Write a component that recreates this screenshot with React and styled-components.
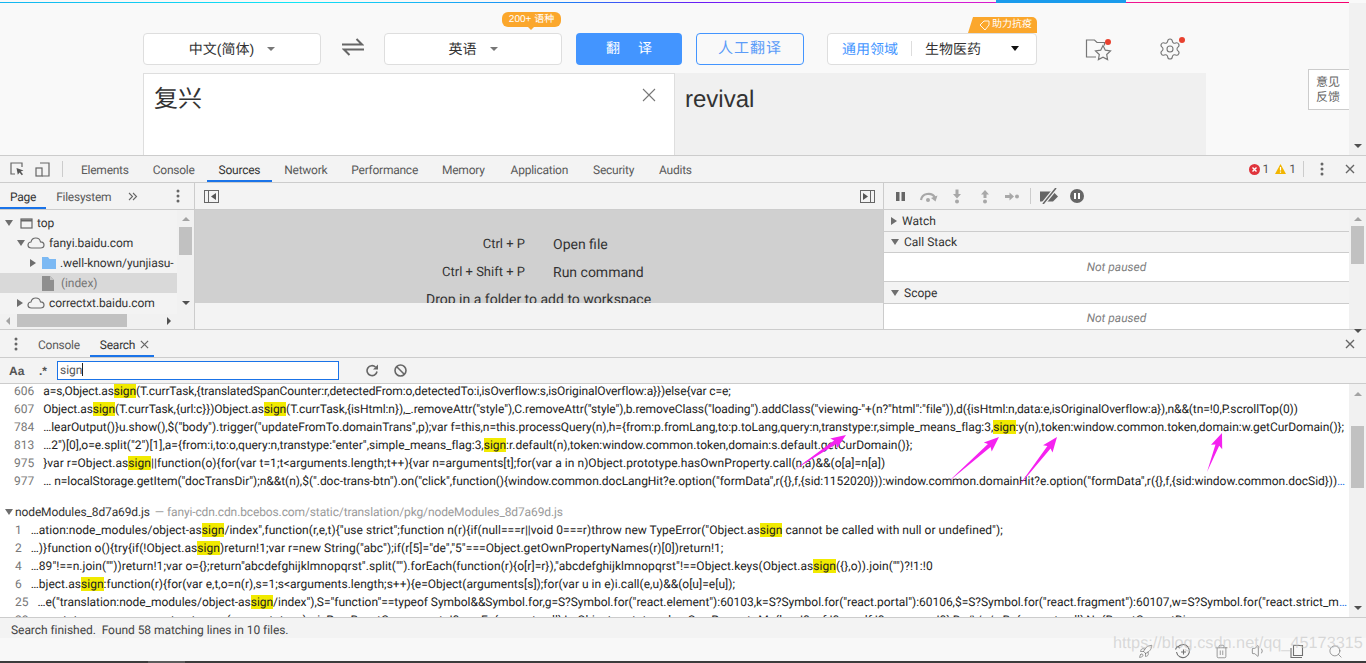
import React from 'react';
import styled, { createGlobalStyle } from 'styled-components';
import { Settings, Rocket, Trash2, Volume1, Search as SearchIcon } from 'lucide-react';

const GlobalStyle = createGlobalStyle`
  html, body {
    margin: 0;
    padding: 0;
    height: 100%;
    overflow: hidden;
    background: #f9f9f9;
  }
  #root {
    height: 100%;
  }
`;

const UI = '"Roboto", "Liberation Sans", sans-serif';
const CN = '"Liberation Sans", "Noto Sans CJK SC", sans-serif';

const Page = styled.div`
  position: relative;
  width: 1366px;
  height: 663px;
  overflow: hidden;
  display: flex;
  flex-direction: column;
  font-family: ${UI};
  text-rendering: geometricPrecision;
`;

/* translate page */
const Site = styled.div`
  height: 155px;
  display: flex;
  flex-direction: column;
  background: #f9f9f9;
  font-family: ${CN};
`;

const ProgressLine = styled.div`
  height: 3px;
  position: relative;
  flex: none;
  &::before {
    content: '';
    position: absolute;
    left: 0;
    right: 17px;
    top: 2px;
    height: 1px;
    background: linear-gradient(90deg, #14b5f0 0%, #12e5f5 22%, #1f7df5 42%, #6a1cf5 52%, #c81ff0 66%, #f0148c 85%, #f5006e 100%);
  }
  &::after {
    content: '';
    position: absolute;
    left: 996px;
    width: 130px;
    top: 0;
    height: 3px;
    background: #1a9bec;
  }
`;

const SiteBody = styled.div`
  flex: 1;
  display: flex;
  min-height: 0;
`;

const SiteMain = styled.div`
  flex: 1;
  padding: 30px 0 0 143px;
  min-width: 0;
`;

const PageScroll = styled.div`
  width: 17px;
  background: #f1f1f1;
  display: flex;
  align-items: flex-end;
  justify-content: center;
  padding-bottom: 7px;
`;

const ControlRow = styled.div`
  display: flex;
  align-items: center;
  height: 32px;
`;

const LangBox = styled.div`
  position: relative;
  width: 178px;
  height: 32px;
  box-sizing: border-box;
  border: 1px solid #dedede;
  border-radius: 4px;
  background: #fff;
  display: flex;
  align-items: center;
  justify-content: center;
  gap: 13px;
  font-size: 14px;
  color: #333;
  padding-bottom: 1px;
`;

const Caret = styled.span`
  width: 0;
  height: 0;
  border-left: 4px solid transparent;
  border-right: 4px solid transparent;
  border-top: 4px solid ${(p) => p.$color || '#777'};
`;

const SwapWrap = styled.div`
  width: 63px;
  display: flex;
  justify-content: center;
  margin-top: -5px;
`;

const Tip = styled.div`
  position: absolute;
  right: 0;
  top: -22px;
  width: 59px;
  height: 15px;
  border-radius: 6px;
  background: #fba72c;
  color: #fff;
  font-size: 10px;
  line-height: 15px;
  text-align: center;
  &::after {
    content: '';
    position: absolute;
    left: 26px;
    bottom: -3px;
    border-left: 3px solid transparent;
    border-right: 3px solid transparent;
    border-top: 3px solid #fba72c;
  }
`;

const TranslateButton = styled.div`
  width: 106px;
  height: 32px;
  margin-left: 14px;
  border-radius: 4px;
  background: #4395ff;
  color: #fff;
  font-size: 14px;
  line-height: 31px;
  text-align: center;
  word-spacing: 14px;
`;

const HumanButton = styled.div`
  width: 108px;
  height: 32px;
  box-sizing: border-box;
  margin-left: 14px;
  border: 1px solid #4395ff;
  border-radius: 4px;
  color: #5b9cf8;
  font-size: 15px;
  line-height: 29px;
  text-align: center;
  letter-spacing: 1px;
`;

const DomainBox = styled.div`
  position: relative;
  width: 210px;
  height: 32px;
  box-sizing: border-box;
  margin-left: 23px;
  padding: 0 0 1px 14px;
  border: 1px solid #dedede;
  border-radius: 4px;
  background: #fff;
  display: flex;
  align-items: center;
  font-size: 14px;
  color: #333;
`;

const DomainLink = styled.span`
  color: #4395ff;
`;

const DomainSep = styled.span`
  width: 1px;
  height: 15px;
  background: #ddd;
  margin: 0 13px;
`;

const DomainCaret = styled.span`
  margin-left: 30px;
  margin-top: -1px;
  border-left: 4px solid transparent;
  border-right: 4px solid transparent;
  border-top: 5px solid #111;
`;

const HelpTag = styled.div`
  position: absolute;
  right: -1px;
  top: -17px;
  width: 69px;
  height: 16px;
  box-sizing: border-box;
  padding-left: 6px;
  background: #fba72c;
  border-radius: 5px 5px 0 0;
  clip-path: polygon(5px 0, 100% 0, 100% 100%, 0 100%);
  color: #fff;
  font-size: 10px;
  line-height: 16px;
  display: flex;
  align-items: center;
  justify-content: center;
  gap: 2px;
`;

const SiteIcon = styled.div`
  position: relative;
  margin-left: ${(p) => p.$left}px;
  margin-top: -1px;
  width: 28px;
  height: 24px;
  color: #777;
`;

const Dot = styled.span`
  position: absolute;
  top: ${(p) => p.$top}px;
  right: ${(p) => p.$right}px;
  width: 6px;
  height: 6px;
  border-radius: 50%;
  background: #e8412f;
`;

const TextPanes = styled.div`
  display: flex;
  margin-top: 8px;
  width: 1063px;
  height: 82px;
`;

const InputPane = styled.div`
  position: relative;
  width: 532px;
  box-sizing: border-box;
  border: 1px solid #dedede;
  border-bottom: none;
  background: #fff;
  padding: 8px 10px;
  font-size: 24px;
  line-height: 36px;
  color: #333;
`;

const ClearIcon = styled.svg`
  position: absolute;
  right: 18px;
  top: 14px;
`;

const OutputPane = styled.div`
  flex: 1;
  background: #f0f0f0;
  padding: 9px 10px;
  font-family: "Liberation Sans", sans-serif;
  font-size: 24px;
  line-height: 36px;
  color: #333;
`;

const Feedback = styled.div`
  position: absolute;
  left: 1308px;
  top: 69px;
  width: 41px;
  height: 41px;
  box-sizing: border-box;
  border: 1px solid #ccc;
  border-right: none;
  background: #fff;
  padding: 5px 0 0 7px;
  font-size: 12px;
  line-height: 15px;
  color: #666;
`;

/* devtools */
const DevTools = styled.div`
  flex: 1;
  display: flex;
  flex-direction: column;
  min-height: 0;
  background: #f3f3f3;
  border-top: 1px solid #ccc;
  color: #333;
  font-size: 12px;
`;

const MainTabs = styled.div`
  height: 26px;
  flex: none;
  display: flex;
  align-items: stretch;
  border-bottom: 1px solid #ccc;
`;

const ToolIcons = styled.div`
  width: 62px;
  display: flex;
  align-items: center;
  gap: 11px;
  padding-left: 10px;
  box-sizing: border-box;
`;

const VLine = styled.span`
  width: 1px;
  height: ${(p) => p.$h || 16}px;
  background: #ccc;
  align-self: center;
  margin: ${(p) => p.$m || '0 6px'};
  flex: none;
`;

const Tab = styled.div`
  padding: 2px ${(p) => p.$padR ?? p.$pad ?? 12}px 0 ${(p) => p.$pad ?? 12}px;
  margin-left: ${(p) => p.$ml || 0}px;
  display: flex;
  align-items: center;
  flex: none;
  letter-spacing: -0.25px;
  color: ${(p) => (p.$active ? '#333' : '#5a5a5a')};
  box-shadow: ${(p) => (p.$active ? 'inset 0 -2px 0 #1a73e8' : 'none')};
`;

const Spacer = styled.div`
  flex: 1;
`;

const Count = styled.div`
  display: flex;
  align-items: center;
  gap: 3px;
  margin-right: 6px;
  color: #555;
`;

const IconBtn = styled.div`
  width: ${(p) => p.$w || 28}px;
  margin-left: ${(p) => p.$ml || 0}px;
  margin-right: ${(p) => p.$mr || 0}px;
  display: flex;
  align-items: center;
  justify-content: center;
  flex: none;
  color: #5f5f5f;
`;

const Panels = styled.div`
  height: 146px;
  flex: none;
  display: grid;
  grid-template-columns: 195px 689px 1fr;
  border-bottom: 1px solid #ccc;
`;

const Sidebar = styled.div`
  display: flex;
  flex-direction: column;
  border-right: 1px solid #ccc;
  min-height: 0;
`;

const SideTabs = styled.div`
  height: 26px;
  flex: none;
  display: flex;
  align-items: stretch;
  border-bottom: 1px solid #ccc;
`;

const TreeWrap = styled.div`
  height: 104px;
  flex: none;
  display: flex;
  overflow: hidden;
`;

const Tree = styled.div`
  flex: 1;
  background: #f3f3f3;
  padding-top: 3px;
  letter-spacing: -0.08px;
`;

const TreeRow = styled.div`
  height: 20px;
  display: flex;
  align-items: center;
  padding-left: ${(p) => p.$indent}px;
  gap: 4px;
  white-space: nowrap;
  overflow: hidden;
  background: ${(p) => (p.$selected ? '#d9d9d9' : 'transparent')};
  color: ${(p) => (p.$muted ? '#777' : '#333')};
`;

const Nudge = styled.span`
  display: flex;
  flex: none;
  margin-left: ${(p) => p.$left}px;
`;

const Arrow = styled.span`
  flex: none;
  width: 0;
  height: 0;
  ${(p) =>
    p.$open
      ? 'border-left: 4px solid transparent; border-right: 4px solid transparent; border-top: 6px solid #6e6e6e;'
      : 'border-top: 4px solid transparent; border-bottom: 4px solid transparent; border-left: 6px solid #6e6e6e;'}
`;

const VScroll = styled.div`
  width: ${(p) => p.$w || 17}px;
  flex: none;
  display: flex;
  flex-direction: column;
  align-items: center;
  background: #f1f1f1;
`;

const Thumb = styled.div`
  width: 13px;
  height: ${(p) => p.$h}px;
  margin-top: ${(p) => p.$top}px;
  background: #c1c1c1;
  flex: none;
`;

const ScrollArrow = styled.span`
  flex: none;
  margin-top: ${(p) => p.$top || 0}px;
  border-left: 4px solid transparent;
  border-right: 4px solid transparent;
  ${(p) => (p.$up ? 'border-bottom: 4px solid #a3a3a3;' : 'border-top: 4px solid #505050;')}
`;

const HScroll = styled.div`
  height: 15px;
  flex: none;
  display: flex;
  align-items: flex-start;
  background: #f1f1f1;
  padding-left: 6px;
`;

const HThumb = styled.div`
  width: 110px;
  height: 13px;
  margin-left: 7px;
  background: #c1c1c1;
`;

const HArrow = styled.span`
  margin-top: 3px;
  border-top: 4px solid transparent;
  border-bottom: 4px solid transparent;
  ${(p) => (p.$left ? 'border-right: 4px solid #a3a3a3;' : 'border-left: 4px solid #505050; margin-left: 40px;')}
`;

const Editor = styled.div`
  display: flex;
  flex-direction: column;
  border-right: 1px solid #ccc;
  min-height: 0;
`;

const EditorBar = styled.div`
  height: 26px;
  flex: none;
  display: flex;
  align-items: center;
  justify-content: space-between;
  padding: 0 8px 0 9px;
  border-bottom: 1px solid #ccc;
`;

const Welcome = styled.div`
  height: 93px;
  flex: none;
  background: #d0d0d0;
  overflow: hidden;
  display: grid;
  grid-template-columns: 330px 1fr;
  grid-auto-rows: 28px;
  column-gap: 28px;
  align-content: start;
  padding-top: 27px;
  box-sizing: border-box;
  font-size: 14px;
  line-height: 16px;
  color: #333;
`;

const Key = styled.div`
  text-align: right;
  font-size: 13px;
`;

const DropHint = styled.div`
  grid-column: 1 / 3;
  padding-left: 231px;
  line-height: 14px;
`;

const DebugPane = styled.div`
  display: flex;
  flex-direction: column;
  min-height: 0;
`;

const DebugBar = styled.div`
  height: 26px;
  flex: none;
  display: flex;
  align-items: center;
  padding-left: 7px;
  border-bottom: 1px solid #ccc;
`;

const DebugBody = styled.div`
  flex: 1;
  display: flex;
  min-height: 0;
`;

const DebugList = styled.div`
  flex: 1;
  overflow: hidden;
`;

const SectionHead = styled.div`
  height: ${(p) => p.$h || 21}px;
  box-sizing: border-box;
  display: flex;
  align-items: center;
  gap: 5px;
  padding-left: 7px;
  border-bottom: 1px solid #ccc;
  background: #f3f3f3;
`;

const NotPaused = styled.div`
  height: ${(p) => p.$h}px;
  box-sizing: border-box;
  padding-top: ${(p) => p.$pt || 0}px;
  background: #fff;
  border-bottom: 1px solid #ccc;
  display: flex;
  align-items: center;
  justify-content: center;
  font-style: italic;
  color: #808080;
`;

const DrawerTabs = styled.div`
  height: 27px;
  flex: none;
  display: flex;
  align-items: stretch;
  border-bottom: 1px solid #ccc;
`;

const SearchBar = styled.div`
  height: 26px;
  flex: none;
  display: flex;
  align-items: center;
  box-sizing: border-box;
  border-bottom: 1px solid #ccc;
  padding-left: 9px;
`;

const SearchOpt = styled.span`
  width: ${(p) => p.$w}px;
  flex: none;
  font-family: "Liberation Sans", sans-serif;
  font-weight: 700;
  color: #555;
`;

const SearchInput = styled.div`
  width: 282px;
  height: 19px;
  box-sizing: border-box;
  border: 1px solid #1a73e8;
  background: #fff;
  padding-left: 2px;
  line-height: 17px;
  color: #555;
`;

const Cursor = styled.span`
  display: inline-block;
  width: 1px;
  height: 13px;
  background: #222;
  vertical-align: -2px;
`;

const ResultArea = styled.div`
  height: 233px;
  flex: none;
  display: flex;
  background: #fff;
  overflow: hidden;
`;

const ResultList = styled.div`
  flex: 1;
  min-width: 0;
  margin-top: -2px;
`;

const Group = styled.div`
  margin-bottom: ${(p) => p.$gap || 0}px;
`;

const FileHead = styled.div`
  height: 18px;
  display: flex;
  align-items: center;
  gap: 2px;
  padding-left: 5px;
  white-space: nowrap;
  color: #333;
  letter-spacing: -0.12px;
`;

const FileUrl = styled.span`
  margin-left: 3px;
  color: #9a9a9a;
`;

const ResultRow = styled.div`
  height: 18px;
  line-height: 18px;
  display: flex;
  align-items: center;
  padding-left: ${(p) => p.$pad}px;
  padding-right: 2px;
  white-space: nowrap;
  overflow: hidden;
  color: #222;
`;

const LineNo = styled.span`
  flex: none;
  margin-right: 9px;
  color: #777;
`;

const LineText = styled.span`
  min-width: 0;
  letter-spacing: ${(p) => p.$ls || 0}px;
  &::after {
    content: '${(p) => (p.$more ? '…' : '')}';
    color: #1a73e8;
  }
`;

const Hit = styled.span`
  background: #f1ea00;
`;

const StatusLine = styled.div`
  height: 21px;
  flex: none;
  box-sizing: border-box;
  border-top: 1px solid #ccc;
  padding-left: 11px;
  line-height: 24px;
  color: #444;
  letter-spacing: -0.05px;
`;

const Tray = styled.div`
  position: relative;
  flex: 1;
  background: #f8f8f8;
  border-bottom: 2px solid #3c3c3c;
  display: flex;
  align-items: center;
  justify-content: flex-end;
  padding: 3px 12px 0 0;
  &::after {
    content: '';
    position: absolute;
    left: 148px;
    width: 37px;
    bottom: -2px;
    height: 2px;
    background: #5c5c5c;
  }
`;

const TrayIcon = styled.div`
  width: 38px;
  display: flex;
  justify-content: center;
  color: #707070;
`;

const Watermark = styled.div`
  position: absolute;
  left: 1113px;
  top: 634px;
  font-family: "Liberation Sans", sans-serif;
  font-size: 16.3px;
  color: rgba(195, 195, 195, 0.6);
  white-space: nowrap;
`;

const ArrowLayer = styled.svg`
  position: absolute;
  left: 0;
  top: 0;
  pointer-events: none;
`;

const Dots = () => (
  <svg width="4" height="14" viewBox="0 0 4 14" fill="#666">
    <circle cx="2" cy="2" r="1.5" />
    <circle cx="2" cy="7" r="1.5" />
    <circle cx="2" cy="12" r="1.5" />
  </svg>
);

const Close = ({ size = 10 }) => (
  <svg width={size} height={size} viewBox="0 0 10 10" stroke="#666" strokeWidth="1.4" fill="none">
    <path d="M1 1l8 8M9 1l-8 8" />
  </svg>
);

const Cloud = () => (
  <svg width="18" height="12" viewBox="0 0 18 12" fill="none" stroke="#6a6a6a" strokeWidth="1.2">
    <path d="M4.5 11C2.5 11 1 9.7 1 8s1.3-3 3-3c.5-2.4 2.5-4 4.8-4 2.3 0 4.2 1.6 4.7 3.8 2 0 3.5 1.400 3.500 3.200S15.500 11 13.500 11z" />
  </svg>
);

const hit = (s) =>
  s.split('§').map((part, i) => (i % 2 ? <Hit key={i}>{part}</Hit> : <React.Fragment key={i}>{part}</React.Fragment>));

const groupOne = [
  { n: 606, ls: -0.105, t: 'a=s,Object.as§sign§(T.currTask,{translatedSpanCounter:r,detectedFrom:o,detectedTo:i,isOverflow:s,isOriginalOverflow:a}})else{var c=e;' },
  { n: 607, ls: -0.08, t: 'Object.as§sign§(T.currTask,{url:c}})Object.as§sign§(T.currTask,{isHtml:n}),_.removeAttr("style"),C.removeAttr("style"),b.removeClass("loading").addClass("viewing-"+(n?"html":"file")),d({isHtml:n,data:e,isOriginalOverflow:a}),n&&(tn=!0,P.scrollTop(0))' },
  { n: 784, ls: -0.045, t: '…learOutput()}u.show(),$("body").trigger("updateFromTo.domainTrans",p);var f=this,n=this.processQuery(n),h={from:p.fromLang,to:p.toLang,query:n,transtype:r,simple_means_flag:3,§sign§:y(n),token:window.common.token,domain:w.getCurDomain()};' },
  { n: 813, ls: -0.02, t: '…2")[0],o=e.split("2")[1],a={from:i,to:o,query:n,transtype:"enter",simple_means_flag:3,§sign§:r.default(n),token:window.common.token,domain:s.default.getCurDomain()};' },
  { n: 975, ls: 0.045, t: '}var r=Object.as§sign§||function(o){for(var t=1;t<arguments.length;t++){var n=arguments[t];for(var a in n)Object.prototype.hasOwnProperty.call(n,a)&&(o[a]=n[a])' },
  { n: 977, ls: -0.04, t: '… n=localStorage.getItem("docTransDir");n&&t(n),$(".doc-trans-btn").on("click",function(){window.common.docLangHit?e.option("formData",r({},f,{sid:1152020})):window.common.domainHit?e.option("formData",r({},f,{sid:window.common.docSid}))', more: true },
];

const groupTwo = [
  { n: 1, ls: 0.035, t: '…ation:node_modules/object-as§sign§/index",function(r,e,t){"use strict";function n(r){if(null===r||void 0===r)throw new TypeError("Object.as§sign§ cannot be called with null or undefined");' },
  { n: 2, ls: 0.05, t: '…)}function o(){try{if(!Object.as§sign§)return!1;var r=new String("abc");if(r[5]="de","5"===Object.getOwnPropertyNames(r)[0])return!1;' },
  { n: 4, ls: 0.04, t: '…89"!==n.join(""))return!1;var o={};return"abcdefghijklmnopqrst".split("").forEach(function(r){o[r]=r}),"abcdefghijklmnopqrst"!==Object.keys(Object.as§sign§({},o)).join("")?!1:!0' },
  { n: 6, ls: 0.015, t: '…bject.as§sign§:function(r){for(var e,t,o=n(r),s=1;s<arguments.length;s++){e=Object(arguments[s]);for(var u in e)i.call(e,u)&&(o[u]=e[u]);' },
  { n: 25, ls: -0.03, t: '…e("translation:node_modules/object-as§sign§/index"),S="function"==typeof Symbol&&Symbol.for,g=S?Symbol.for("react.element"):60103,k=S?Symbol.for("react.portal"):60106,$=S?Symbol.for("react.fragment"):60107,w=S?Symbol.for("react.strict_m', more: true },
  { n: 28, ls: -0.03, t: '…prototype=new p,v.constructor=y,u(v,m.prototype),v.isPureReactComponent=!0;var E={current:null},L=Object.prototype.hasOwnProperty,M={key:!0,ref:!0,__self:!0,__source:!0},D=/\\/+/g,R={current:null},N={ReactCurrentDisp' },
];

const arrows = [
  [794, 470, 846, 435],
  [948, 482, 999, 437],
  [1018, 487, 1057, 437],
  [1207, 472, 1222, 433],
];

// thin tail that widens into a head, like a screenshot tool's arrow
const arrowPoints = ([x1, y1, x2, y2]) => {
  const len = Math.hypot(x2 - x1, y2 - y1);
  const ux = (x2 - x1) / len;
  const uy = (y2 - y1) / len;
  const at = (along, side) => `${x2 - ux * along - uy * side},${y2 - uy * along + ux * side}`;
  return [`${x1},${y1}`, at(13, 2), at(15, 6), `${x2},${y2}`, at(15, -6), at(13, -2)].join(' ');
};

const Results = () => (
  <ResultList>
    <Group $gap={13}>
      {groupOne.map((r) => (
        <ResultRow key={r.n} $pad={14}>
          <LineNo>{r.n}</LineNo>
          <LineText $more={r.more} $ls={r.ls}>{hit(r.t)}</LineText>
        </ResultRow>
      ))}
    </Group>
    <Group>
      <FileHead>
        <Arrow $open />
        <span>nodeModules_8d7a69d.js</span>
        <FileUrl>— fanyi-cdn.cdn.bcebos.com/static/translation/pkg/nodeModules_8d7a69d.js</FileUrl>
      </FileHead>
      {groupTwo.map((r) => (
        <ResultRow key={r.n} $pad={15}>
          <LineNo>{r.n}</LineNo>
          <LineText $more={r.more} $ls={r.ls}>{hit(r.t)}</LineText>
        </ResultRow>
      ))}
    </Group>
  </ResultList>
);

export default function App() {
  return (
    <Page>
      <GlobalStyle />
      <Site>
        <ProgressLine />
        <SiteBody>
          <SiteMain>
            <ControlRow>
              <LangBox>
                中文(简体) <Caret />
              </LangBox>
              <SwapWrap>
                <svg width="22" height="18" viewBox="0 0 22 18" fill="none" stroke="#666" strokeWidth="2">
                  <path d="M0 6.500h20L14.500 1M22 11.500H2L7.500 17" />
                </svg>
              </SwapWrap>
              <LangBox>
                英语 <Caret />
                <Tip>200+ 语种</Tip>
              </LangBox>
              <TranslateButton>翻 译</TranslateButton>
              <HumanButton>人工翻译</HumanButton>
              <DomainBox>
                <DomainLink>通用领域</DomainLink>
                <DomainSep />
                生物医药
                <DomainCaret />
                <HelpTag>
                  <svg width="11" height="11" viewBox="0 0 11 11" fill="none" stroke="#fff" strokeWidth="0.9">
                    <path d="M1 5l4-4h5v4l-4 5z" />
                  </svg>
                  助力抗疫
                </HelpTag>
              </DomainBox>
              <SiteIcon $left={48}>
                <svg width="27" height="24" viewBox="0 0 27 24" fill="none" stroke="#777" strokeWidth="1.2">
                  <path d="M11 20H1.500V3h8l2.500 2.500h7.500v3" />
                  <path d="M18 8.500l2.300 4.700 5.200.7-3.800 3.600.9 5.100-4.600-2.400-4.600 2.400.9-5.100-3.800-3.600 5.200-.7z" />
                </svg>
                <Dot $top={2} $right={2} />
              </SiteIcon>
              <SiteIcon $left={45}>
                <Settings size={24} strokeWidth={1.1} color="#777" />
                <Dot $top={0} $right={1} />
              </SiteIcon>
            </ControlRow>
            <TextPanes>
              <InputPane>
                复兴
                <ClearIcon width="14" height="14" viewBox="0 0 14 14" stroke="#777" strokeWidth="1.1" fill="none">
                  <path d="M1 1l12 12M13 1L1 13" />
                </ClearIcon>
              </InputPane>
              <OutputPane>revival</OutputPane>
            </TextPanes>
          </SiteMain>
          <PageScroll>
            <ScrollArrow />
          </PageScroll>
        </SiteBody>
        <Feedback>
          意见
          <br />
          反馈
        </Feedback>
      </Site>

      <DevTools>
        <MainTabs>
          <ToolIcons>
            <svg width="14" height="14" viewBox="0 0 14 14" fill="none" stroke="#666" strokeWidth="1.2">
              <path d="M5 12H1V1h11v4" />
              <path d="M6.500 6l7 2.500-2.800 1 2.300 2.800-1.200 1-2.300-2.800-1.700 2.300z" fill="#555" stroke="none" />
            </svg>
            <svg width="15" height="15" viewBox="0 0 15 15" fill="none" stroke="#666" strokeWidth="1.2">
              <path d="M5 1h9v13H7" />
              <rect x="1" y="6" width="6" height="8" />
            </svg>
          </ToolIcons>
          <VLine $m="0 6px 0 0" />
          <Tab>Elements</Tab>
          <Tab>Console</Tab>
          <Tab $active>Sources</Tab>
          <Tab>Network</Tab>
          <Tab>Performance</Tab>
          <Tab>Memory</Tab>
          <Tab $ml={2}>Application</Tab>
          <Tab $ml={1}>Security</Tab>
          <Tab $ml={1}>Audits</Tab>
          <Spacer />
          <Count>
            <svg width="11" height="11" viewBox="0 0 11 11">
              <circle cx="5.500" cy="5.500" r="5.500" fill="#e0343c" />
              <path d="M3.500 3.500l4 4M7.500 3.500l-4 4" stroke="#fff" strokeWidth="1.400" />
            </svg>
            1
          </Count>
          <Count>
            <svg width="11" height="10" viewBox="0 0 11 10">
              <path d="M5.500 0L11 10H0z" fill="#f2b500" />
              <path d="M5.500 3v3.500M5.500 7.500v1.200" stroke="#fff" strokeWidth="1.200" />
            </svg>
            1
          </Count>
          <VLine $m="0 2px 0 1px" />
          <IconBtn $w={32}>
            <Dots />
          </IconBtn>
          <IconBtn $w={24} $mr={4}>
            <Close />
          </IconBtn>
        </MainTabs>

        <Panels>
          <Sidebar>
            <SideTabs>
              <Tab $active $pad={10}>Page</Tab>
              <Tab $pad={10}>Filesystem</Tab>
              <IconBtn $w={24}>
                <svg width="10" height="9" viewBox="0 0 10 9" fill="none" stroke="#666" strokeWidth="1.100">
                  <path d="M1 1l3.500 3.500L1 8M5 1l3.500 3.500L5 8" />
                </svg>
              </IconBtn>
              <Spacer />
              <IconBtn $w={32}>
                <Dots />
              </IconBtn>
            </SideTabs>
            <TreeWrap>
              <Tree>
                <TreeRow $indent={5}>
                  <Arrow $open />
                  <Nudge $left={3}>
                    <svg width="13" height="11" viewBox="0 0 13 11" fill="none" stroke="#666" strokeWidth="1.200">
                      <rect x="1" y="1" width="11" height="9" />
                      <path d="M1 2.500h11" strokeWidth="2" />
                    </svg>
                  </Nudge>
                  <span>top</span>
                </TreeRow>
                <TreeRow $indent={17}>
                  <Arrow $open />
                  <Nudge $left={-2}>
                    <Cloud />
                  </Nudge>
                  <span>fanyi.baidu.com</span>
                </TreeRow>
                <TreeRow $indent={30}>
                  <Arrow />
                  <Nudge $left={2}>
                    <svg width="14" height="12" viewBox="0 0 14 12">
                      <path d="M0 0h6l1.500 2H14v10H0z" fill="#7cb9f3" />
                    </svg>
                  </Nudge>
                  <span>.well-known/yunjiasu-</span>
                </TreeRow>
                <TreeRow $indent={42} $selected $muted>
                  <svg width="12" height="15" viewBox="0 0 12 15">
                    <path d="M0 0h8l4 4v11H0z" fill="#8f8f8f" />
                    <path d="M8 0l4 4H8z" fill="#c4c4c4" />
                  </svg>
                  <Nudge $left={3}>(index)</Nudge>
                </TreeRow>
                <TreeRow $indent={17}>
                  <Arrow />
                  <Cloud />
                  <span>correctxt.baidu.com</span>
                </TreeRow>
              </Tree>
              <VScroll>
                <ScrollArrow $up $top={7} />
                <Thumb $h={28} $top={6} />
                <ScrollArrow $top={46} />
              </VScroll>
            </TreeWrap>
            <HScroll>
              <HArrow $left />
              <HThumb />
              <HArrow />
            </HScroll>
          </Sidebar>

          <Editor>
            <EditorBar>
              <svg width="15" height="13" viewBox="0 0 15 13" fill="none" stroke="#666">
                <rect x="0.500" y="0.500" width="14" height="12" />
                <path d="M4.500 0v13" />
                <path d="M12 3v7L7 6.500z" fill="#555" stroke="none" />
              </svg>
              <svg width="15" height="13" viewBox="0 0 15 13" fill="none" stroke="#666">
                <rect x="0.500" y="0.500" width="14" height="12" />
                <path d="M10.500 0v13" />
                <path d="M3 3v7l5-3.500z" fill="#555" stroke="none" />
              </svg>
            </EditorBar>
            <Welcome>
              <Key>Ctrl + P</Key>
              <div>Open file</div>
              <Key>Ctrl + Shift + P</Key>
              <div>Run command</div>
              <DropHint>Drop in a folder to add to workspace</DropHint>
            </Welcome>
          </Editor>

          <DebugPane>
            <DebugBar>
              <svg width="196" height="16" viewBox="0 0 196 16">
                <path d="M5 4h3.500v9H5zM10.500 4H14v9h-3.500z" fill="#666" />
                <path d="M30 12a7.500 7 0 0 1 14-2.500" fill="none" stroke="#a8a8a8" strokeWidth="2.200" />
                <path d="M46.500 7.500l-2 6-4.500-3.500z" fill="#a8a8a8" />
                <circle cx="37" cy="12" r="2" fill="#a8a8a8" />
                <path d="M64.500 1.500h3V6H70l-4 4.500L62 6h2.500z" fill="#a8a8a8" />
                <circle cx="66" cy="13.500" r="2" fill="#a8a8a8" />
                <path d="M92.500 10h3V6.500H98L94 2l-4 4.500h2.500z" fill="#a8a8a8" />
                <circle cx="94" cy="13.500" r="2" fill="#a8a8a8" />
                <path d="M114 7h4.500V4.500l4.500 4-4.500 4V10H114z" fill="#a8a8a8" />
                <circle cx="126" cy="8.500" r="2" fill="#a8a8a8" />
                <path d="M139.500 0v16" stroke="#ccc" />
                <path d="M149 3.500h13l5 5-5 5h-13z" fill="#666" />
                <path d="M152 16L165 0" stroke="#f3f3f3" strokeWidth="4" />
                <path d="M152 16L165 0" stroke="#666" strokeWidth="1.600" />
                <circle cx="186" cy="8" r="7" fill="#666" />
                <path d="M183 5h2v6h-2zM187 5h2v6h-2z" fill="#fff" />
              </svg>
            </DebugBar>
            <DebugBody>
              <DebugList>
                <SectionHead $h={22}>
                  <Arrow />
                  Watch
                </SectionHead>
                <SectionHead>
                  <Arrow $open />
                  Call Stack
                </SectionHead>
                <NotPaused $h={29}>Not paused</NotPaused>
                <SectionHead $h={22}>
                  <Arrow $open />
                  Scope
                </SectionHead>
                <NotPaused $h={26} $pt={3}>Not paused</NotPaused>
              </DebugList>
              <VScroll>
                <ScrollArrow $up $top={7} />
                <Thumb $h={38} $top={5} />
                <ScrollArrow $top={65} />
              </VScroll>
            </DebugBody>
          </DebugPane>
        </Panels>

        <DrawerTabs>
          <IconBtn $w={32}>
            <Dots />
          </IconBtn>
          <Tab $pad={6}>Console</Tab>
          <Tab $active $pad={10} $padR={5} $ml={4}>
            Search
            <Nudge $left={5}>
              <Close size={9} />
            </Nudge>
          </Tab>
          <Spacer />
          <IconBtn $w={24} $mr={4}>
            <Close />
          </IconBtn>
        </DrawerTabs>

        <SearchBar>
          <SearchOpt $w={30}>Aa</SearchOpt>
          <SearchOpt $w={18}>.*</SearchOpt>
          <SearchInput>
            sign
            <Cursor />
          </SearchInput>
          <IconBtn $w={14} $ml={26}>
            <svg width="13" height="13" viewBox="0 0 13 13" fill="none" stroke="#666" strokeWidth="1.600">
              <path d="M11 7.500a5 5 0 1 1-1.500-4.500" />
              <path d="M12 .5v5H7z" fill="#666" stroke="none" />
            </svg>
          </IconBtn>
          <IconBtn $w={14} $ml={14}>
            <svg width="13" height="13" viewBox="0 0 13 13" fill="none" stroke="#666" strokeWidth="1.600">
              <circle cx="6.500" cy="6.500" r="5.500" />
              <path d="M2.500 2.500l8 8" />
            </svg>
          </IconBtn>
        </SearchBar>

        <ResultArea>
          <Results />
          <VScroll>
            <ScrollArrow $up $top={8} />
            <Thumb $h={62} $top={30} />
            <ScrollArrow $top={118} />
          </VScroll>
        </ResultArea>

        <StatusLine>Search finished.{'\u00a0\u00a0'}Found 58 matching lines in 10 files.</StatusLine>

        <Tray>
          <TrayIcon>
            <Rocket size={15} strokeWidth={1.1} />
          </TrayIcon>
          <TrayIcon>
            <svg width="16" height="16" viewBox="0 0 16 16" fill="none" stroke="currentColor" strokeWidth="1.100">
              <path d="M2.500 4.500A6.500 6.500 0 1 1 1.500 9" />
              <path d="M.5 6.500L2 3.500 5 5M6 9h5M8.500 6.500v5" />
            </svg>
          </TrayIcon>
          <TrayIcon>
            <Trash2 size={15} strokeWidth={1.1} />
          </TrayIcon>
          <TrayIcon>
            <Volume1 size={16} strokeWidth={1.1} />
          </TrayIcon>
          <TrayIcon>
            <svg width="14" height="15" viewBox="0 0 14 15" fill="none" stroke="currentColor" strokeWidth="1.100">
              <path d="M3.500 1.500h9v10h-9zM1 4v9.500h11" />
            </svg>
          </TrayIcon>
          <TrayIcon>
            <SearchIcon size={15} strokeWidth={1.1} />
          </TrayIcon>
        </Tray>
      </DevTools>

      <Watermark>https://blog.csdn.net/qq_45173315</Watermark>

      <ArrowLayer width="1366" height="663" viewBox="0 0 1366 663">
        {arrows.map((a) => (
          <polygon key={a[0]} points={arrowPoints(a)} fill="#f522f0" />
        ))}
      </ArrowLayer>
    </Page>
  );
}
